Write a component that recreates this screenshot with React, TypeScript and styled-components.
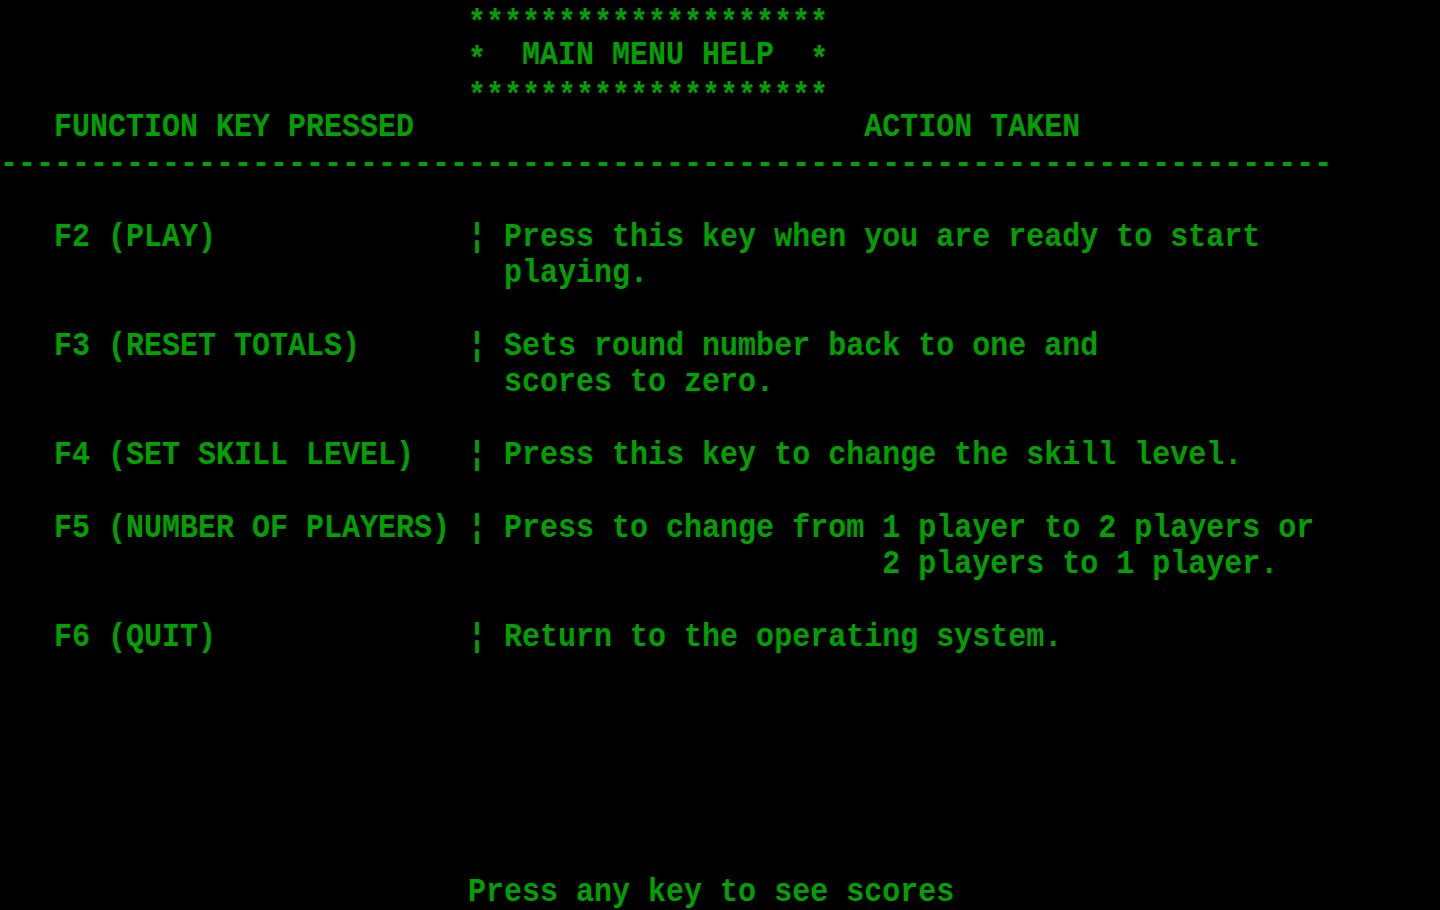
import React from "react";
import styled, { createGlobalStyle } from "styled-components";

const Global = createGlobalStyle`
  html, body {
    margin: 0;
    padding: 0;
    background: #000;
  }
  #root {
    min-height: 100vh;
    background: #000;
  }
`;

const COLS = 80;
const ROWS = 25;
const GREEN = "#00a000";

// A classic 80x25 text-mode screen: every cell is 18px wide, every row 36.4px tall.
const Screen = styled.div`
  width: 1440px;
  height: 910px;
  background: #000;
  display: grid;
  grid-template-rows: repeat(${ROWS}, 1fr);
  overflow: hidden;
`;

const Line = styled.div`
  font-family: "Liberation Mono", "DejaVu Sans Mono", monospace;
  font-weight: 700;
  font-size: 30px;
  letter-spacing: 0;
  color: ${GREEN};
  white-space: pre;
  display: flex;
  align-items: center;
  line-height: 1;
`;

const Text = styled.span`
  display: inline-block;
  transform: scaleY(1.12);
  transform-origin: center;
`;

// The text-mode asterisk sits on the middle of its cell and fills most of it.
const Star = styled.span`
  display: inline-block;
  width: 18px;
  height: 22px;
  line-height: 22px;
  text-align: center;
  transform: translateY(5px) scaleY(1.1);
  transform-origin: center;
`;

const at = (col: number, text: string) => " ".repeat(col) + text;
const pair = (key: string, action: string) =>
  at(3, key).padEnd(26, " ") + "\u00a6 " + action;

const screenRows: string[] = [
  at(26, "********************"),
  at(26, "*  MAIN MENU HELP  *"),
  at(26, "********************"),
  at(3, "FUNCTION KEY PRESSED").padEnd(48, " ") + "ACTION TAKEN",
  "-".repeat(74),
  "",
  pair("F2 (PLAY)", "Press this key when you are ready to start"),
  at(28, "playing."),
  "",
  pair("F3 (RESET TOTALS)", "Sets round number back to one and"),
  at(28, "scores to zero."),
  "",
  pair("F4 (SET SKILL LEVEL)", "Press this key to change the skill level."),
  "",
  pair("F5 (NUMBER OF PLAYERS)", "Press to change from 1 player to 2 players or"),
  at(49, "2 players to 1 player."),
  "",
  pair("F6 (QUIT)", "Return to the operating system."),
  "",
  "",
  "",
  "",
  "",
  "",
  at(26, "Press any key to see scores"),
];

function renderRow(row: string) {
  const parts = row.slice(0, COLS).split(/(\*)/);
  return parts.map((part, i) =>
    part === "*" ? (
      <Star key={i}>*</Star>
    ) : part ? (
      <Text key={i}>{part}</Text>
    ) : null
  );
}

export default function App() {
  return (
    <>
      <Global />
      <Screen>
        {screenRows.map((row, i) => (
          <Line key={i}>{row ? renderRow(row) : " "}</Line>
        ))}
      </Screen>
    </>
  );
}
